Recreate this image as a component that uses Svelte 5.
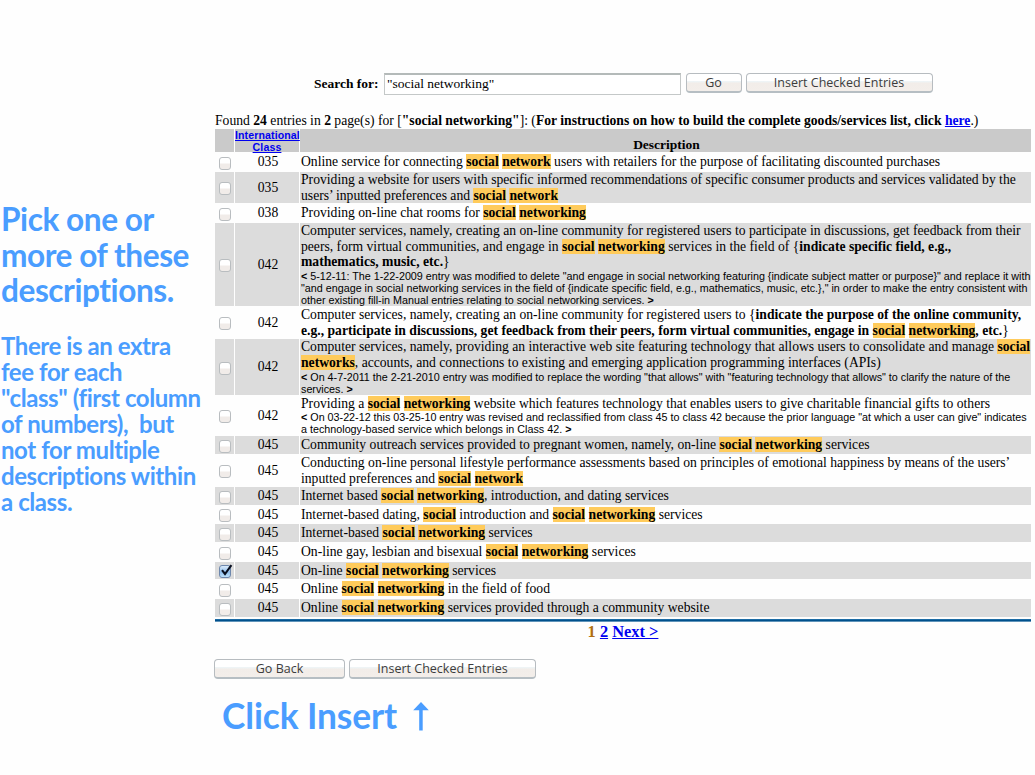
<script>
  // *text* is bold, [text] is a highlighted search hit, a leading ~ marks an editorial note
  const rows = [
    { h: 19, c: '035', t: ['Online service for connecting [social] [network] users with retailers for the purpose of facilitating discounted purchases'] },
    { h: 32, c: '035', t: ['Providing a website for users with specific informed recommendations of specific consumer products and services validated by the', 'users’ inputted preferences and [social] [network]'] },
    { h: 19, c: '038', t: ['Providing on-line chat rooms for [social] [networking]'] },
    { h: 84, c: '042', t: ['Computer services, namely, creating an on-line community for registered users to participate in discussions, get feedback from their', 'peers, form virtual communities, and engage in [social] [networking] services in the field of {*indicate specific field, e.g.,*', '*mathematics, music, etc.*}', '~*<* 5-12-11: The 1-22-2009 entry was modified to delete "and engage in social networking featuring {indicate subject matter or purpose}" and replace it with', '~"and engage in social networking services in the field of {indicate specific field, e.g., mathematics, music, etc.}," in order to make the entry consistent with', '~other existing fill-in Manual entries relating to social networking services. *>*'] },
    { h: 32, c: '042', t: ['Computer services, namely, creating an on-line community for registered users to {*indicate the purpose of the online community,*', '*e.g., participate in discussions, get feedback from their peers, form virtual communities, engage in *[social] [networking]*, etc.*}'] },
    { h: 57, c: '042', t: ['Computer services, namely, providing an interactive web site featuring technology that allows users to consolidate and manage [social]', '[networks], accounts, and connections to existing and emerging application programming interfaces (APIs)', '~*<* On 4-7-2011 the 2-21-2010 entry was modified to replace the wording "that allows" with "featuring technology that allows" to clarify the nature of the', '~services. *>*'] },
    { h: 40, c: '042', t: ['Providing a [social] [networking] website which features technology that enables users to give charitable financial gifts to others', '~*<* On 03-22-12 this 03-25-10 entry was revised and reclassified from class 45 to class 42 because the prior language "at which a user can give" indicates', '~a technology-based service which belongs in Class 42. *>*'] },
    { h: 19, c: '045', t: ['Community outreach services provided to pregnant women, namely, on-line [social] [networking] services'] },
    { h: 32, c: '045', t: ['Conducting on-line personal lifestyle performance assessments based on principles of emotional happiness by means of the users’', 'inputted preferences and [social] [network]'] },
    { h: 19, c: '045', t: ['Internet based [social] [networking], introduction, and dating services'] },
    { h: 18, c: '045', t: ['Internet-based dating, [social] introduction and [social] [networking] services'] },
    { h: 19, c: '045', t: ['Internet-based [social] [networking] services'] },
    { h: 19, c: '045', t: ['On-line gay, lesbian and bisexual [social] [networking] services'] },
    { h: 18, c: '045', t: ['On-line [social] [networking] services'], checked: true },
    { h: 19, c: '045', t: ['Online [social] [networking] in the field of food'] },
    { h: 19, c: '045', t: ['Online [social] [networking] services provided through a community website'] }
  ];
  const parts = (s) =>
    s.replace(/^~/, '').split(/(\*[^*]+\*|\[[^\]]+\])/).filter(Boolean).map((p) =>
      p[0] === '*' ? { k: 'b', s: p.slice(1, -1) } : p[0] === '[' ? { k: 'hit', s: p.slice(1, -1) } : { k: '', s: p });
</script>

<div class="page">
  <aside>
    <p class="big">Pick one or<br />more of these<br />descriptions.</p>
    <p class="small">There is an extra<br />fee for each<br />"class" (first column<br />of numbers),&nbsp; but<br />not for multiple<br />descriptions within<br />a class.</p>
  </aside>
  <main>
    <form class="search" onsubmit={(e) => e.preventDefault()}>
      <label for="q">Search for:</label>
      <input id="q" type="text" value={'"social networking"'} />
      <button class="go">Go</button>
      <button class="ins">Insert Checked Entries</button>
    </form>
    <div class="found">Found <b>24</b> entries in <b>2</b> page(s) for [<b>"social networking"</b>]: (<b>For instructions on how to build the complete goods/services list, click <a href="#help">here</a></b>.)</div>
    <div class="row head">
      <div></div>
      <div class="intl"><a href="#class">International<br />Class</a></div>
      <div class="dh">Description</div>
    </div>
    {#each rows as r, i}
      <div class="row" class:alt={i % 2 === 1} style="height:{r.h}px">
        <div class="ck">
          <span class="box" class:on={r.checked}>
            {#if r.checked}
              <svg width="16" height="15" viewBox="0 0 16 15"><path d="M3 6.2L6 10L12.4 1.2" fill="none" stroke="#0a1020" stroke-width="2.1" /></svg>
            {/if}
          </span>
        </div>
        <div class="cl">{r.c}</div>
        <div class="ds">
          {#each r.t as line}
            <div class="line" class:note={line[0] === '~'}>{#each parts(line) as p}<span class={p.k}>{p.s}</span>{/each}</div>
          {/each}
        </div>
      </div>
    {/each}
    <div class="rule"></div>
    <nav><span class="cur">1</span> <a href="#2">2</a> <a href="#2">Next &gt;</a></nav>
    <div class="actions">
      <button class="back">Go Back</button>
      <button class="ins">Insert Checked Entries</button>
    </div>
    <div class="click">Click Insert
      <svg width="16" height="29" viewBox="0 0 16 29"><path d="M8 0L15.8 8.3H9.7V28.5H6.2V8.3H0.2Z" fill="#4a9dff" /></svg>
    </div>
  </main>
</div>

<style>
  :global(body) { background: #fefefe; overflow: hidden; }
  .page { display: flex; width: 1035px; height: 775px; font-family: "Liberation Serif", serif; font-size: 13.65px; color: #000; }
  a { color: #0000f0; text-decoration: underline; }
  aside { width: 215px; flex: none; box-sizing: border-box; padding: 202px 0 0 1px; font-family: Lato, sans-serif; font-weight: 700; color: #4a9dff; white-space: nowrap; }
  aside p { margin: 0; }
  .big { font-size: 31.6px; line-height: 35.7px; letter-spacing: -0.45px; }
  .small { font-size: 24px; line-height: 26px; margin-top: 24px !important; letter-spacing: -0.42px; }
  main { width: 816px; flex: none; }
  .search { display: flex; height: 22px; padding: 73px 0 0 99px; }
  label { font-weight: 700; line-height: 21px; width: 70px; white-space: nowrap; font-size: 13.5px; }
  input { box-sizing: border-box; width: 297px; height: 22px; border: 1px solid #c4c8c8; border-top: 2px solid #b4bab9; padding: 0 2px 2px; background: #fff; font: 13.5px "Liberation Serif", serif; color: #000; }
  button { box-sizing: border-box; height: 20px; padding: 0; border: 1px solid #b7bcc0; border-bottom: 2px solid #b6bec3; border-radius: 4px; background: linear-gradient(#fff 0 40%, #eef5f8 42%, #f2ede9 55%, #f3eeea); font: 12.5px "Open Sans", sans-serif; color: #3c3c3c; line-height: 17px; }
  .go { width: 56px; margin-left: 4.5px; }
  .ins { width: 187px; margin-left: 4px; }
  .found { margin-top: 17px; height: 17px; line-height: 17px; white-space: nowrap; }
  .row { display: grid; grid-template-columns: 19px 64px 731px; column-gap: 1px; height: 19px; box-sizing: border-box; padding-bottom: 1px; }
  .row > div { min-width: 0; min-height: 0; }
  .alt > div { background: #dcdcdc; }
  .head { height: 24px; font-weight: 700; }
  .head > div { background: #cacaca; }
  .row > .intl { padding-top: 1px; text-align: center; font: 700 10.6px/11.5px "Liberation Sans", sans-serif; letter-spacing: 0.1px; white-space: nowrap; }
  .dh { text-align: center; line-height: 31px; padding-left: 2px; font-size: 13.5px; }
  .ck { display: flex; align-items: center; padding: 2px 0 0 4px; }
  .box { box-sizing: border-box; width: 12px; height: 13px; border: 1px solid #b9bdc0; border-radius: 3px; background: linear-gradient(#fff 45%, #f1ece9 55%); }
  .on { background: linear-gradient(#dcecfb, #8fbdec 55%, #bfe2fb); border-color: #6d87ad; }
  .on svg { display: block; margin: -2px 0 0 -1px; }
  .cl { display: flex; align-items: center; justify-content: center; padding-left: 2px; }
  .ds { display: flex; flex-direction: column; justify-content: center; padding-left: 1px; }
  .line { height: 15.6px; line-height: 15.6px; white-space: pre; }
  .note { height: 12px; font: 10.75px/12px "Liberation Sans", sans-serif; }
  .b { font-weight: 700; }
  .hit { font-weight: 700; background: #ffcb5b; }
  .rule { height: 3px; margin-top: 1px; background: linear-gradient(#2a78b0, #00508c, #8fb5d0); }
  nav { margin-top: 1px; height: 18px; line-height: 18px; text-align: center; font-size: 16.4px; font-weight: 700; }
  .cur { color: #b06f10; }
  .actions { display: flex; margin: 18px 0 0 -1px; }
  .back { width: 131px; }
  .click { display: flex; gap: 16px; align-items: center; padding-left: 7px; margin-top: 14px; height: 46px; font: 700 35.3px/46px Lato, sans-serif; letter-spacing: -0.1px; color: #4a9dff; white-space: nowrap; }
</style>
